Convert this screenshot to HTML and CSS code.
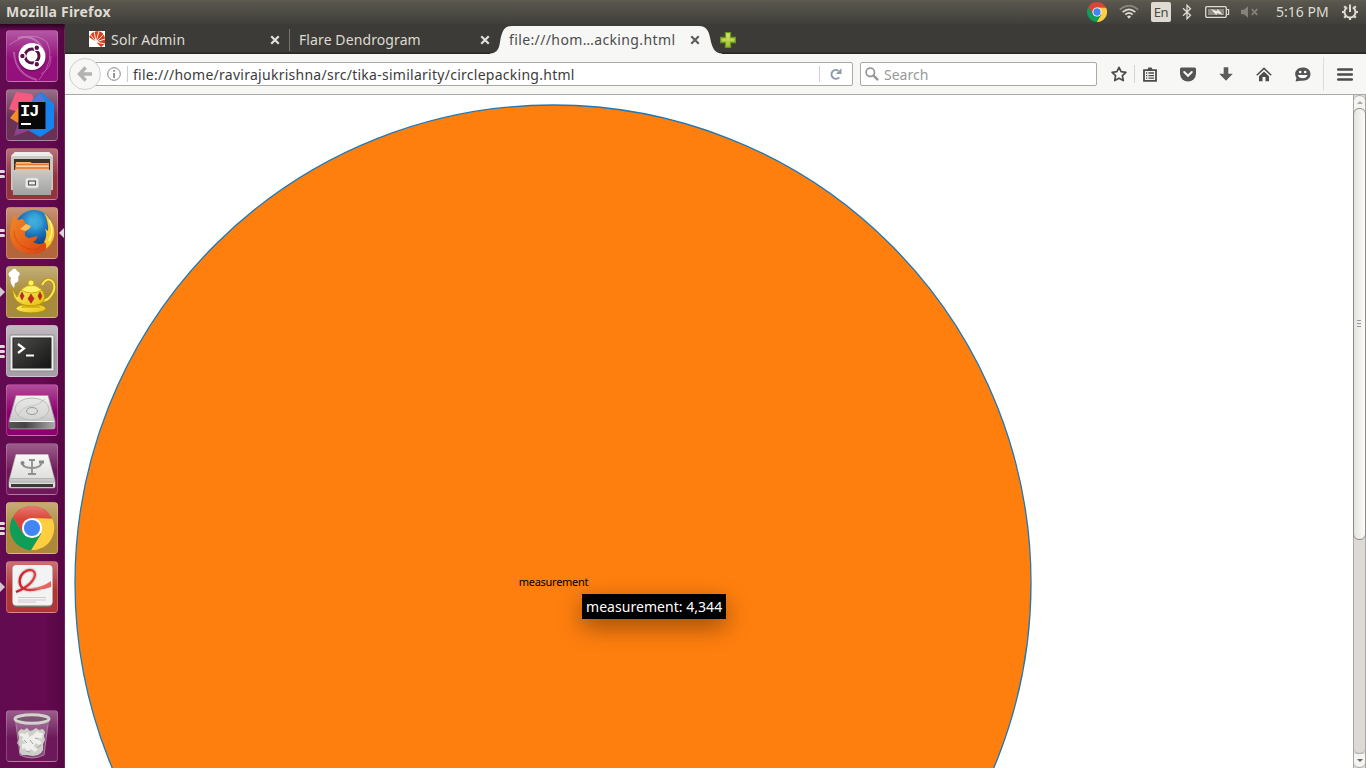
FILE: index.html
```html
<!DOCTYPE html>
<html lang="en">
<head>
<meta charset="utf-8">
<title>Mozilla Firefox</title>
<link rel="stylesheet" href="styles.css">
</head>
<body>
<svg class="defs" width="0" height="0">
  <defs>
    <linearGradient id="metal" x1="0" y1="0" x2="0" y2="1"><stop offset="0" stop-color="#f4f4f2"/><stop offset="1" stop-color="#b9b9b6"/></linearGradient>
    <linearGradient id="metalDark" x1="0" y1="0" x2="1" y2="0"><stop offset="0" stop-color="#555"/><stop offset=".35" stop-color="#444"/><stop offset="1" stop-color="#aaa"/></linearGradient>
    <linearGradient id="screen" x1="0" y1="0" x2="1" y2="1"><stop offset="0" stop-color="#4c4c4a"/><stop offset="1" stop-color="#151515"/></linearGradient>
    <linearGradient id="fox" x1="0" y1="0" x2="1" y2="1"><stop offset="0" stop-color="#f08a24"/><stop offset=".6" stop-color="#e65a16"/><stop offset="1" stop-color="#d43b10"/></linearGradient>
    <radialGradient id="globe" cx=".5" cy=".3" r=".7"><stop offset="0" stop-color="#4cc3ee"/><stop offset=".5" stop-color="#1d75bb"/><stop offset="1" stop-color="#0c3474"/></radialGradient>
    <linearGradient id="gold" x1="0" y1="0" x2="1" y2="1"><stop offset="0" stop-color="#fff27a"/><stop offset="1" stop-color="#e3bd08"/></linearGradient>
    <linearGradient id="ribbon" x1="0" y1="0" x2="1" y2="0"><stop offset="0" stop-color="#c81920"/><stop offset="1" stop-color="#ee6a66"/></linearGradient>
    <linearGradient id="plus" x1="0" y1="0" x2="0" y2="1"><stop offset="0" stop-color="#d9ea6c"/><stop offset="1" stop-color="#a3c22d"/></linearGradient>
    <linearGradient id="gloss" x1="0" y1="0" x2="0" y2="1"><stop offset="0" stop-color="#fff" stop-opacity=".3"/><stop offset=".6" stop-color="#fff" stop-opacity="0"/></linearGradient>
    <g id="chrome">
      <path d="M-20.8-12A24 24 0 0 1 20.8-12L22-10H0L-10 6Z" fill="#db4437"/>
      <path d="M22-10A24 24 0 0 1-1 24L10 6 0-11Z" fill="#ffcd40"/>
      <path d="M-20.8-12A24 24 0 0 0-1 24L10 6-10 6Z" fill="#0f9d58"/>
      <circle r="11" fill="#fff"/><circle r="8.8" fill="#4285f4"/>
    </g>
  </defs>
</svg>

<header class="panel">
  <span class="panel-title">Mozilla Firefox</span>
  <div class="indicators">
    <svg class="ind ind-chrome" width="20" height="20" viewBox="-24 -24 48 48"><use href="#chrome"/></svg>
    <svg class="ind ind-wifi" width="20" height="14" viewBox="0 0 20 14" fill="none" stroke-width="1.7"><path d="M.8 4.6Q10-3.2 19.2 4.6" stroke="#8b887e"/><path d="M3.7 7.2Q10 1.6 16.3 7.2M6.3 9.6Q10 6 13.7 9.6" stroke="#dfdbd2"/><path d="M8 11.4Q10 9.8 12 11.4L10 13.8Z" fill="#dfdbd2" stroke="none"/></svg>
    <span class="ind ind-lang">En</span>
    <svg class="ind ind-bt" width="10" height="16" viewBox="0 0 10 16" fill="none" stroke="#dfdbd2" stroke-width="1.3"><path d="M1 4.3 8.5 11.3 5 14.8V1.2L8.5 4.7 1 11.7"/></svg>
    <svg class="ind ind-battery" width="25" height="14" viewBox="0 0 25 14"><rect x=".7" y="1.7" width="20.6" height="10.6" rx="1.2" fill="none" stroke="#dfdbd2" stroke-width="1.3"/><rect x="3" y="4" width="16" height="6" fill="#8d8a81"/><path d="M22 4.5h1.6v5H22" fill="none" stroke="#dfdbd2" stroke-width="1.2"/><path d="M6 4 12 6.3 12.6 4 18 10 12 8 11.4 10.2Z" fill="#efece6"/></svg>
    <svg class="ind ind-sound" width="18" height="12" viewBox="0 0 18 12"><path d="M0 3.8h3L7 .3v11.4L3 8.2H0Z" fill="#85827a"/><path d="m10.8 3.2 5.5 5.6m0-5.6-5.5 5.6" stroke="#85827a" stroke-width="1.7"/></svg>
    <span class="ind ind-clock">5:16 PM</span>
    <svg class="ind ind-gear" width="18" height="18" viewBox="-9 -9 18 18" fill="none" stroke="#dfdbd2"><path d="M-2.8-4.7A5.5 5.5 0 1 0 2.8-4.7" stroke-width="2"/><path d="M0-7.5V0" stroke-width="2"/><path d="M5.5 0H8M-5.5 0H-8M0 5.5V8M4 4l1.8 1.8M-4 4l-1.8 1.8M4.3-4.3l1.5-1.5M-4.3-4.3l-1.5-1.5" stroke-width="2.2"/></svg>
  </div>
</header>

<div class="desktop">
<nav class="launcher">
  <div class="tile t-dash"><svg viewBox="0 0 52 52"><g fill="none" stroke="#fff" opacity=".28"><path d="M3 15Q25-1 41 12 50 29 33 50"/><path d="M8 22Q9 44 31 50M12 8Q31 3 39 24" stroke-width="2"/><path d="M45 26Q46 38 35 44"/></g><circle cx="26" cy="27.5" r="14" fill="#3b0b31" opacity=".3"/><circle cx="26" cy="26.5" r="13.5" fill="#fff"/><circle cx="26" cy="26" r="7" fill="none" stroke="#5b1249" stroke-width="3"/><g stroke="#fff" stroke-width="1.2"><path d="M17 26h4M30 19l-2 3M30 33l-2-3"/><g fill="#5b1249"><circle cx="16.4" cy="26" r="2.8"/><circle cx="30.8" cy="17.7" r="2.8"/><circle cx="30.8" cy="34.3" r="2.8"/></g></g></svg></div>
  <div class="tile t-idea"><svg viewBox="0 0 52 52"><path d="M10 3 26 5 30 16 15 24 3 20Z" fill="#f5597d"/><path d="M4 29 13 18 20 28 12 34Z" fill="#f68b2b"/><path d="M26 11 35 3 48 15 48 39 34 48 20 40Z" fill="#1683ee"/><path d="m34 4 6 9v26L26 34V12Z" fill="#5374dd"/><path d="M14 27 30 39 8 47Z" fill="#8c458d"/><rect x="12.5" y="13" width="27" height="27" fill="#080808"/><text class="idea-text" x="14" y="27">IJ</text><path d="M15 34h10v2H15Z" fill="#fff"/></svg></div>
  <div class="tile t-files"><i class="pips"><b></b><b></b></i><svg viewBox="0 0 52 52"><path d="M9 4h34l4 4v34H5V8Z" fill="#c9c9c6"/><path d="M9 4h34l4 4H5Z" fill="#ececea"/><path d="M8 11h36v12H8Z" fill="#3b322c"/><path d="M10 14h14l2 1h17v8H9Z" fill="#ffb56b"/><path d="M9 16.5h34M9 20h34" stroke="#e5782d" stroke-width="1.5"/><path d="M10 18.2h32" stroke="#ffe2be"/><path d="M6 22H46L45 47H7Z" fill="url(#metal)"/><path d="M6 22H46L45 47H7Z" fill="#777" opacity=".35"/><rect x="19.5" y="30" width="13" height="10" rx="2" fill="#eee" stroke="#ccc"/><rect x="22.5" y="33" width="7" height="4" fill="#eee" stroke="#565656" stroke-width="1.2"/></svg></div>
  <div class="tile t-firefox"><i class="pips"><b></b><b></b></i><svg viewBox="0 0 52 52"><circle cx="28" cy="22" r="19" fill="url(#globe)"/><path d="M27 5Q37 8 36 18L30 23 25 17Z" fill="#3aa3d3" opacity=".6"/><path d="M40 9Q50 18 47 31 42 47 25 47 5 45 4 27 4 15 9 8L11 13 17 12 20 17 25 19 23 22 19 25Q18 30 23 31L31 29Q32 32 27 35 35 40 41 33 44 24 40 9Z" fill="url(#fox)"/><path d="M38 6Q50 16 48 30 46 37 40 42 41 36 38 35 42 28 39 22L42 24Q43 15 38 6Z" fill="#fcca2c"/><path d="M43 13Q49 23 43 34" fill="none" stroke="#fff28a" stroke-width="1.8"/><path d="M20 17 25 19 23 22 19 24 14 22Z" fill="#f9bd66"/><path d="M8 24Q9 37 20 41 30 45 37 38" fill="none" stroke="#bf3a0e" opacity=".5"/></svg><i class="focus"></i></div>
  <div class="tile t-tea"><i class="arrow"></i><svg viewBox="0 0 52 52"><path d="M8 22Q3 16 5 12 0 8 5 5 9 0 11 5 16 7 12 11 14 16 9 17Z" fill="#fff"/><path d="M36 19Q41 10 47 16 51 23 43 32 40 35 35 35" fill="none" stroke="#b18a03" stroke-width="3.6"/><path d="M36 19Q41 10 47 16 51 23 43 32 40 35 35 35" fill="none" stroke="#fce65c" stroke-width="2"/><ellipse cx="25" cy="42.5" rx="15" ry="4.5" fill="url(#gold)" stroke="#b58a02"/><path d="M17 38h15l3 4H15Z" fill="#dab608"/><path d="M6 22 11 31 14 25Q25 14 37 25 43 38 27 40 12 40 8 31Z" fill="url(#gold)" stroke="#bb9806"/><path d="M15 24Q25 14 36 24 25 30 15 24Z" fill="#fff165" stroke="#c09b0a" stroke-width=".8"/><circle cx="25" cy="17" r="3" fill="#fff064" stroke="#b89505" stroke-width=".7"/><g fill="#cf2028" stroke="#84340b" stroke-width=".6"><path d="M25 28l3 4.7-3 4.5-3-4.5ZM16 26l2 4-2 4-2-4ZM34 26l2 4-2 4-2-4Z"/></g></svg></div>
  <div class="tile t-term"><i class="pips"><b></b><b></b><b></b></i><svg viewBox="0 0 52 52"><rect x="4" y="10" width="44" height="36" rx="1.5" fill="#eee" stroke="#888"/><rect x="7" y="13" width="38" height="30" fill="url(#screen)" stroke="#222"/><path d="m12 19 6 4.5-6 4.5" fill="none" stroke="#fff" stroke-width="2.2"/><path d="M20 30.5h8" stroke="#fff" stroke-width="2"/></svg></div>
  <div class="tile t-disk"><svg viewBox="0 0 52 52"><path d="M10 11.5H42L49 37V43Q49 45 47 45H5Q3 45 3 43V37Z" fill="url(#metal)" stroke="#999" stroke-width=".7"/><path d="M3 38h46v6.5H3Z" fill="url(#metalDark)"/><ellipse cx="26" cy="25" rx="17" ry="11" fill="#ddd" fill-opacity=".5" stroke="#bbb"/><ellipse cx="26" cy="27" rx="5.5" ry="3.5" fill="#ddd" stroke="#999"/><path d="M11 32Q18 22 25 22T39 15" fill="none" stroke="#c4c4c4"/><path d="M4 37.5h44" stroke="#f8f8f8"/></svg></div>
  <div class="tile t-usb"><svg viewBox="0 0 52 52"><path d="M10 11.5H42L49 38V43Q49 45 47 45H5Q3 45 3 43V38Z" fill="url(#metal)" stroke="#aaa" stroke-width=".7"/><path d="M10 11.5H42L48 35H4Z" fill="#fff" opacity=".4"/><path d="M3 39.5h46v5H3Z" fill="#ddd"/><path d="M5 41h42v3H5Z" fill="#3b3b3b"/><path d="M3 35.5H49M4 39H48" stroke="#aaa" stroke-width=".7"/><path d="M26 16v15m-3-14h6m-7 14h8M16 20Q17 25 26 25q9 0 10-6" fill="none" stroke="#8f8f8f" stroke-width="1.8"/><circle cx="16.5" cy="20" r="2" fill="#888"/><path d="M33 17.5h5v3h-5Z" fill="#888"/></svg></div>
  <div class="tile t-chrome"><i class="pips"><b></b><b></b><b></b></i><svg viewBox="0 0 52 52"><g transform="translate(26 26) scale(.92)"><use href="#chrome"/><path d="M-24 0A24 24 0 0 1 24 0H11A11 11 0 0 0-11 0Z" fill="url(#gloss)"/></g></svg></div>
  <div class="tile t-pdf"><i class="arrow"></i><svg viewBox="0 0 52 52"><rect x="6.5" y="5" width="40" height="41" rx="4" fill="#777"/><rect x="6.5" y="4" width="40" height="40.5" rx="4" fill="#f3f3f3"/><path d="M10 31Q27 24 29 14C29 4 11 10 14 23 16 31 29 31 45 23" fill="none" stroke="#ddd" stroke-width="5"/><path d="M10 31Q27 24 29 14C29 4 11 10 14 23 16 31 29 31 45 23" fill="none" stroke="url(#ribbon)" stroke-width="2.4"/><path d="M26 27Q36 27 45 20V26Q34 30 26 27Z" fill="#e76561"/><path d="M12 36.5h28M12 39h28M12 41h18" stroke="#ccc" stroke-width="1.2"/></svg></div>
  <div class="tile t-trash"><svg viewBox="0 0 52 52"><path d="M10 10h32L38 45Q26 51 14 45Z" fill="#fff" opacity=".2"/><path d="M12 22l3-3 3 1 3-2 3 3 3-1 3-2 3 2 4-1 2 3-1 4 1 4-2 4v6l-2 3-3 2-5 1-6-1-5 0-3-3 1-5-3-4 2-4Z" fill="#cfcfca"/><path d="M15 23l4 1 3-2 1 5 4-2 4-4 3 2 3 0-1 5-4 1 4 4-3 2-4-2-1 4 4 2-3 3-4-3-4 3-2-4-3 1 0-5 4-1-4-3 1-3-4-2Z" fill="#eeeeeb"/><path d="M18 30l3 3M24 30l3 4M31 38l4-3M20 41l4 1M29 28l4 1" stroke="#a5a59f" stroke-width="1"/><path d="M9.5 10 14 45Q26 51 38 45L42.5 10" fill="none" stroke="#b29cac" stroke-width=".8"/><ellipse cx="26" cy="9" rx="17" ry="4.2" fill="#7c5573" stroke="#d2d3cf" stroke-width="3"/></svg></div>
</nav>

<main class="browser">
  <div class="tabs">
    <div class="tab tab-first">
      <svg width="16" height="16" viewBox="0 0 16 16"><path d="M0 0h16v16H0Z" fill="#fff"/><path d="M0 6Q3 0 9 0 15 1 16 7V13L12 16 7 11Z" fill="#d9411e"/><path d="M7 11 0 8M7 11 1 3M7 11 5 0M7 11 10 0M7 11 15 3M7 11 16 8M7 11l9 2" stroke="#fff" stroke-width=".9"/></svg>
      <span class="tab-label l-solr">Solr Admin</span>
      <svg class="close" viewBox="0 0 8 8"><path d="m1 1 6 6M7 1 1 7"/></svg>
    </div>
    <div class="tab tab-second">
      <span class="tab-label l-flare">Flare Dendrogram</span>
      <svg class="close" viewBox="0 0 8 8"><path d="m1 1 6 6M7 1 1 7"/></svg>
    </div>
    <div class="tab tab-active">
      <svg class="tab-shape" width="236" height="30" viewBox="0 0 236 30"><path d="M0 29.5C7 29 9 25 10 18 12 7 14 2 22 2H209C217 2 219 7 221 18 223 25 225 29 232 29.5V30H0Z" fill="#f7f7f5"/></svg>
      <span class="tab-label l-file">file:///hom…acking.html</span>
      <svg class="close" viewBox="0 0 8 8"><path d="m1 1 6 6M7 1 1 7"/></svg>
    </div>
    <svg class="newtab" width="16" height="16" viewBox="0 0 16 16"><path d="M5.5.7h5v4.8h4.8v5h-4.8v4.8h-5v-4.8H.7v-5h4.8Z" fill="url(#plus)" stroke="#6c9822" stroke-width="1.3"/></svg>
  </div>

  <div class="toolbar">
    <div class="back"><svg width="16" height="16" viewBox="0 0 16 16" fill="none" stroke="#b3b3b1" stroke-width="3.4"><path d="M8.7 1.5 2.5 8l6.2 6.5M3 8h12"/></svg></div>
    <div class="urlbar">
      <svg class="info" width="14" height="14" viewBox="0 0 14 14"><circle cx="7" cy="7" r="6.3" fill="none" stroke="#858585"/><path d="M6.2 3h1.7v1.7H6.2ZM6.2 6h1.7v5H6.2Z" fill="#858585"/></svg>
      <span class="url"><span>file:///home/ravirajukrishna/src/tika-similarity/circlepacking.html</span></span>
      <span class="reload"><svg width="12" height="12" viewBox="0 0 12 12"><path d="M9.2 9.3A4.4 4.4 0 1 1 8.5 2.8" fill="none" stroke="#8e9baa" stroke-width="2"/><path d="M11.5.3V6H5.8Z" fill="#8e9baa"/></svg></span>
    </div>
    <div class="search">
      <svg width="14" height="14" viewBox="0 0 14 14" fill="none" stroke="#989898"><circle cx="5.3" cy="5.3" r="4.2" stroke-width="1.8"/><path d="m8.3 8.3 4.8 4.8" stroke-width="2.4"/></svg>
      <span class="search-text">Search</span>
    </div>
    <div class="tools">
      <svg class="star" width="16" height="16" viewBox="0 0 16 16"><path d="m8 1.3 2.1 4.4 4.8.6-3.5 3.4.9 4.9L8 12.2l-4.3 2.4.9-4.9L1.1 6.3l4.8-.6Z" fill="none" stroke="#4c4c4c" stroke-width="1.7" stroke-linejoin="round"/></svg>
      <i class="divider"></i>
      <svg class="list" width="14" height="15" viewBox="0 0 14 15"><path d="M1 3.2h12v10.6H1Z" fill="#f7f7f5" stroke="#4c4c4c" stroke-width="1.8"/><path d="M4 3.5 5.5.5h3L10 3.5Z" fill="#4c4c4c"/><path d="M3 6h1.3m1.2 0H11M3 8.6h1.3m1.2 0H11M3 11.2h1.3m1.2 0H11" stroke="#4c4c4c" stroke-width="1.3"/></svg>
      <svg class="pocket" width="16" height="15" viewBox="0 0 16 15"><path d="M1.5.5h13Q16 .5 16 2v4.5a8 8 0 0 1-16 0V2Q0 .5 1.5.5Z" fill="#555"/><path d="m4.2 5 3.8 3.8L11.8 5" fill="none" stroke="#f7f7f5" stroke-width="2" stroke-linecap="round"/></svg>
      <svg class="down" width="14" height="14" viewBox="0 0 14 14"><path d="M4.7.3h4.6v6.4h4.5L7 13.8.2 6.7h4.5Z" fill="#5c5c5c"/></svg>
      <svg class="home" width="16" height="15" viewBox="0 0 16 15"><path d="M.8 8.2 8 1.4l7.2 6.8" fill="none" stroke="#4c4c4c" stroke-width="1.5"/><path d="M3 9.2 8 4.6l5 4.6v5.1H9.5V10h-3v4.3H3Z" fill="#4c4c4c"/></svg>
      <svg class="chat" width="17" height="15" viewBox="0 0 17 15"><path d="M8.7.4C13.5.4 16.5 3 16.5 7s-3 6.7-7.8 6.7H6L1.5 14.5l1-3.3C-.8 6 2.3.4 8.7.4Z" fill="#555"/><circle cx="6.2" cy="5" r="1.3" fill="#fff"/><circle cx="11.2" cy="5" r="1.3" fill="#fff"/><path d="M3.8 8h9.8Q12.5 11.3 8.7 11.3T3.8 8Z" fill="#fff"/></svg>
      <span class="menu"><svg width="16" height="13" viewBox="0 0 16 13"><path d="M1.2 1.5h13.6M1.2 6.5h13.6M1.2 11.5h13.6" stroke="#4c4c4c" stroke-width="2.6" stroke-linecap="round"/></svg></span>
    </div>
  </div>

  <div class="viewport">
    <div class="document">
      <svg class="pack" width="960" height="960" viewBox="0 0 960 960"><circle cx="480" cy="480" r="478" fill="#ff7f0e" stroke="#1f77b4" stroke-width="1.3"/><text class="node-label" x="480.5" y="483" text-anchor="middle">measurement</text></svg>
      <div class="tooltip"><span>measurement: 4,344</span></div>
    </div>
    <div class="scrollbar">
      <div class="scroll-btn up"><i></i></div>
      <div class="thumb"><svg width="5" height="9" viewBox="0 0 5 9"><path d="M0 1.5h4M0 4.5h4M0 7.5h4" stroke="#999"/></svg></div>
      <div class="track"></div>
      <div class="scroll-btn bottom"><i></i></div>
    </div>
  </div>
</main>
</div>
</body>
</html>
```
FILE: styles.css
```css
* { box-sizing: border-box; }
body { margin: 0; width: 1366px; height: 768px; overflow: hidden; display: flex; flex-direction: column; background: #fff; font: 14px/20px "Noto Sans", "Open Sans", sans-serif; }
svg { display: block; flex: none; }
span { white-space: nowrap; }
.defs { position: absolute; }

.panel { height: 24px; flex: none; display: flex; align-items: center; justify-content: space-between; padding: 0 7px 0 6px; color: #dfdbd2; background: linear-gradient(#5f5d51 0, #58564d 2px, #403f3a 24px); }
.panel-title { font-weight: 700; font-size: 14px; letter-spacing: .22px; }
.indicators { display: flex; align-items: center; }
.ind-wifi { margin-left: 12px; }
.ind-lang { width: 20px; height: 20px; margin-left: 12px; border-radius: 2px; background: #dfdbd2; color: #4b4943; text-align: center; font-size: 13px; letter-spacing: -.5px; }
.ind-bt { margin-left: 11px; }
.ind-battery { margin-left: 13px; }
.ind-sound { margin-left: 11px; }
.ind-clock { width: 53px; margin-left: 17px; font-size: 14px; letter-spacing: 0; }
.ind-gear { margin-left: 12px; }

.desktop { flex: 1; min-height: 0; display: flex; }
.launcher { width: 65px; flex: none; display: flex; flex-direction: column; gap: 7px; padding: 6px 7px 6px 6px; background: linear-gradient(#2c0322 0, transparent 6px), linear-gradient(90deg, #620b50 0, #650950 45px, #560644 64px, #7b4a70 65px); }
.tile { position: relative; width: 52px; height: 52px; flex: none; border-radius: 4px; border: 1px solid rgba(255,255,255,.2); background: linear-gradient(rgba(255,255,255,.3), rgba(255,255,255,0) 55%), var(--c); }
.tile > svg { width: 52px; height: 52px; margin: -1px; }
.t-dash { --c: #94107c; }
.t-idea { --c: #6b3055; }
.t-files { --c: #93343c; }
.t-firefox { --c: #b3653c; }
.t-tea { --c: #a88a3c; }
.t-term { --c: #a79ea6; }
.t-disk { --c: #8e006d; }
.t-usb { --c: #701858; }
.t-chrome { --c: #ad883a; }
.t-pdf { --c: #b13535; }
.t-trash { --c: #6d185a; margin-top: auto; }
.idea-text { font: 700 17px "Liberation Mono", monospace; letter-spacing: -1px; fill: #fff; }
.pips { position: absolute; left: -7px; top: 0; height: 50px; display: flex; flex-direction: column; justify-content: center; gap: 2px; }
.pips b { width: 5px; height: 3px; border-radius: 0 2px 2px 0; background: #dfdbd9; }
.arrow { position: absolute; left: -7px; top: 20px; border: 5px solid transparent; border-left-color: #d5c7d0; border-right: 0; }
.focus { position: absolute; right: -7px; top: 20px; border: 5px solid transparent; border-right-color: #e0d5dd; border-left: 0; }

.browser { flex: 1; min-width: 0; display: flex; flex-direction: column; }
.tabs { height: 30px; flex: none; display: flex; align-items: center; background: linear-gradient(#3c3b37 28px, #282724 29px); }
.tab { position: relative; display: flex; align-items: center; height: 30px; color: #dfdbd2; }
.tab-first { width: 225px; padding: 0 10px 0 24px; }
.tab-first .tab-label { margin-left: 6px; }
.tab-second { width: 200px; padding: 0 0 0 9px; }
.tab-second::before { content: ""; position: absolute; left: -1px; top: 5px; width: 1px; height: 22px; background: #77756f; }
.tab-active { width: 232px; padding: 0 22px 0 19px; color: #4c4c4c; }
.tab-shape { position: absolute; left: 0; top: 0; }
.tab-active .tab-label, .tab-active .close { position: relative; }
.tab-label { font-size: 14px; margin-top: 1px; }
.l-solr { letter-spacing: .22px; }
.l-flare { letter-spacing: .1px; }
.l-file { letter-spacing: .38px; }
.close { width: 10px; height: 10px; margin-left: auto; margin-top: 1px; fill: none; stroke: #e3e0d9; stroke-width: 1.8; }
.tab-active .close { stroke: #5e5e5c; }
.newtab { margin-left: -2px; margin-top: 2px; }

.toolbar { height: 41px; flex: none; display: flex; align-items: center; background: #f7f7f5; border-bottom: 1px solid #aaa9a5; }
.back { position: relative; z-index: 1; width: 32px; height: 32px; flex: none; margin-left: 4px; border: 1px solid #cfcfcc; border-radius: 50%; background: #f7f7f5; display: grid; place-items: center; }
.urlbar { height: 24px; width: 758px; margin-left: -6px; padding-left: 11px; border: 1px solid #aaa9a5; border-radius: 0 2px 2px 0; background: #fff; display: flex; align-items: center; }
.info { margin-right: 6px; }
.url { border-left: 1px solid #ccc; height: 16px; line-height: 18px; padding-left: 5px; color: #3c3c3c; letter-spacing: .265px; }
.reload { margin-left: auto; width: 33px; height: 16px; display: grid; place-items: center; border-left: 1px solid #d0d0d0; }
.search { width: 237px; height: 24px; margin-left: 7px; padding-left: 4px; border: 1px solid #aaa9a5; border-radius: 2px; background: #fff; display: flex; align-items: center; color: #989898; }
.search-text { margin-left: 5px; padding-top: 2px; }
.tools { display: flex; align-items: center; height: 40px; }
.star { margin-left: 14px; }
.divider { width: 1px; height: 18px; margin-left: 7px; background: #d5d5d2; }
.list { margin-left: 8px; }
.pocket { margin-left: 23px; }
.down { margin-left: 23px; }
.home { margin-left: 23px; }
.chat { margin-left: 22px; }
.menu { margin-left: 12px; height: 34px; padding-left: 13px; border-left: 1px solid #dededb; display: flex; align-items: center; }

.viewport { flex: 1; min-height: 0; display: flex; }
.document { position: relative; flex: 1; overflow: hidden; padding: 8px; background: #fff; }
.node-label { font: 11px "Noto Sans", sans-serif; letter-spacing: -.28px; fill: #000; }
.tooltip { position: absolute; left: 517px; top: 499px; width: 144px; height: 25px; padding: 3px 4px; background: #000; color: #fff; font-size: 14px; letter-spacing: .04px; box-shadow: 0 8px 24px rgba(0,0,0,.4); }
.scrollbar { width: 13px; flex: none; display: flex; flex-direction: column; background: #dcd9d6; border: 1px solid #aaa7a3; border-width: 0 1px; }
.scroll-btn { flex: none; background: #f4f4f2; display: grid; place-items: center; }
.scroll-btn i { border: 3px solid transparent; }
.up { height: 16px; margin-bottom: -3px; border-radius: 7px 7px 0 0; border-top: 1px solid #aaa; }
.up i { border-bottom-color: #aaa; border-top: 0; margin-bottom: 2px; }
.thumb { height: 432px; flex: none; margin: 0 -1px; padding-bottom: 2px; border: 1px solid #8f8c88; border-radius: 6px; background: linear-gradient(90deg, #e4e3e1, #fcfcfb); display: grid; place-items: center; }
.track { flex: 1; border-bottom: 1px solid #aaa; border-radius: 0 0 6px 6px; }
.bottom { height: 14px; border-radius: 0 0 6px 6px; border-bottom: 1px solid #aaa; }
.bottom i { border-top-color: #666; border-bottom: 0; }
```
